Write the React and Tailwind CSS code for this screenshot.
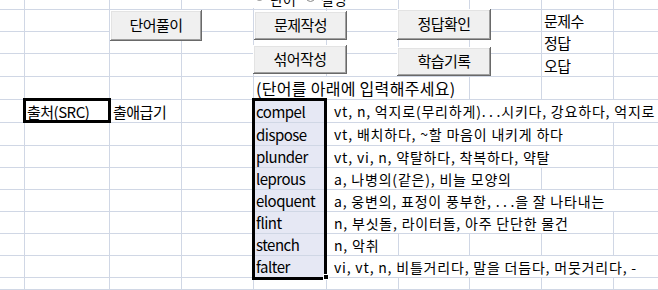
import React from 'react';

const COLS = 'grid-cols-[25px_85px_72px_72px_73px_72px_71px_72px_72px_72px]';
const ROWS = 'grid-rows-[10px_22px_22px_23px_23px_23px_23px_22px_22px_22px_22px_22px_22px_12px]';

const SPAN = {
    1: 'col-span-1',
    2: 'col-span-2',
    3: 'col-span-3',
    4: 'col-span-4',
    5: 'col-span-5',
};

const words = [
    ['compel', 'vt, n, 억지로(무리하게)...시키다, 강요하다, 억지로 얻어내다', 5],
    ['dispose', 'vt, 배치하다, ~할 마음이 내키게 하다', 4],
    ['plunder', 'vt, vi, n, 약탈하다, 착복하다, 약탈', 4],
    ['leprous', 'a, 나병의(같은), 비늘 모양의', 3],
    ['eloquent', 'a, 웅변의, 표정이 풍부한, ...을 잘 나타내는', 5],
    ['flint', 'n, 부싯돌, 라이터돌, 아주 단단한 물건', 4],
    ['stench', 'n, 악취', 1],
    ['falter', 'vi, vt, n, 비틀거리다, 말을 더듬다, 머뭇거리다, -', 5],
];

const empty = (n) => Array.from({ length: n }, () => ({}));

// one entry per row, cells left to right (A..J)
const sheet = [
    empty(10),
    [...empty(8), { text: '문제수' }, {}],
    [...empty(8), { text: '정답' }, {}],
    [...empty(8), { text: '오답' }, {}],
    [...empty(4), { text: '(단어를 아래에 입력해주세요)', span: 3, kind: 'note' }, ...empty(3)],
    ...words.map(([word, meaning, span], i) => [
        {},
        i === 0 ? { text: '출처(SRC)' } : {},
        i === 0 ? { text: '출애급기', pad: 'pl-[3px]' } : {},
        {},
        { text: word, kind: 'word' },
        { text: meaning, span, kind: 'meaning' },
        ...empty(5 - span),
    ]),
    empty(10),
];

const withDots = (text) =>
    text.split('...').map((part, i) => (
        <React.Fragment key={i}>
            {i > 0 && (
                <>
                    <span className="tracking-[3.5px]">..</span>.
                </>
            )}
            {part}
        </React.Fragment>
    ));

const Cell = ({ text, span = 1, kind, pad }) => {
    let look = "font-['Noto_Sans_CJK_KR',sans-serif] text-[15px] tracking-[-0.5px] pl-[2px]";
    if (kind === 'meaning') look = "font-['Noto_Sans_CJK_KR',sans-serif] text-[14px] tracking-[0.8px] pl-[7px]";
    if (kind === 'note') look = "font-['Noto_Sans_CJK_KR',sans-serif] text-[16px] tracking-[0.3px] pl-[2px]";

    return (
        <div
            className={`${SPAN[span]} flex items-center whitespace-pre border-r border-b border-[#d0d7e5] text-black leading-none ${look} ${pad || ''} ${kind === 'word' ? 'bg-[#e6e8f4]' : ''}`}
        >
            {kind === 'meaning' ? <span>{withDots(text)}</span> : text}
        </div>
    );
};

const Button = ({ label, className }) => (
    <div
        className={`absolute flex items-center justify-center bg-[#f0f0f0] shadow-[inset_-1px_-1px_#696969,inset_1px_1px_#ffffff,inset_-2px_-2px_#a0a0a0,inset_2px_2px_#e3e3e3] font-['Noto_Sans_CJK_KR',sans-serif] text-[15px] tracking-[-0.5px] text-black ${className}`}
    >
        {label}
    </div>
);

const App = () => {
    return (
        <div className="relative w-[658px] h-[290px] overflow-hidden bg-white">
            {/* Sheet */}
            <div className={`grid ${COLS} ${ROWS} w-[686px]`}>
                {sheet.map((row, r) => row.map((cell, c) => <Cell key={`${r}-${c}`} {...cell} />))}
            </div>

            {/* Thick borders */}
            <div className="absolute left-[23px] top-[98px] w-[88px] h-[25px] border-[3px] border-black" />
            <div className="absolute left-[252px] top-[98px] w-[75px] h-[182px] border-[3px] border-black" />
            <div className="absolute left-[323px] top-[274px] w-[6px] h-[6px] bg-black border border-white" />

            {/* Radio group, mostly scrolled out of view */}
            <div className="absolute left-[252px] top-0 w-[100px] h-[8px] bg-white overflow-hidden">
                <div className="flex items-center h-[19px] -mt-[10px] font-['Noto_Sans_CJK_KR',sans-serif] text-[14px] text-black">
                    <span className="ml-[3px] w-[9px] h-[9px] mb-[6px] rounded-full border border-[#888] bg-white flex items-center justify-center">
                        <span className="w-[3px] h-[3px] rounded-full bg-black" />
                    </span>
                    <span className="ml-[6px]">단어</span>
                    <span className="ml-[10px] w-[9px] h-[9px] mb-[5px] rounded-full border border-[#888] bg-white" />
                    <span className="ml-[6px]">설명</span>
                </div>
            </div>

            {/* Buttons */}
            <Button label="단어풀이" className="left-[110px] top-[10px] w-[92px] h-[31px]" />
            <Button label="문제작성" className="left-[254px] top-[11px] w-[93px] h-[29px]" />
            <Button label="섞어작성" className="left-[253px] top-[45px] w-[94px] h-[29px]" />
            <Button label="정답확인" className="left-[397px] top-[9px] w-[94px] h-[31px]" />
            <Button label="학습기록" className="left-[397px] top-[47px] w-[94px] h-[29px]" />
        </div>
    );
};

export default App;
